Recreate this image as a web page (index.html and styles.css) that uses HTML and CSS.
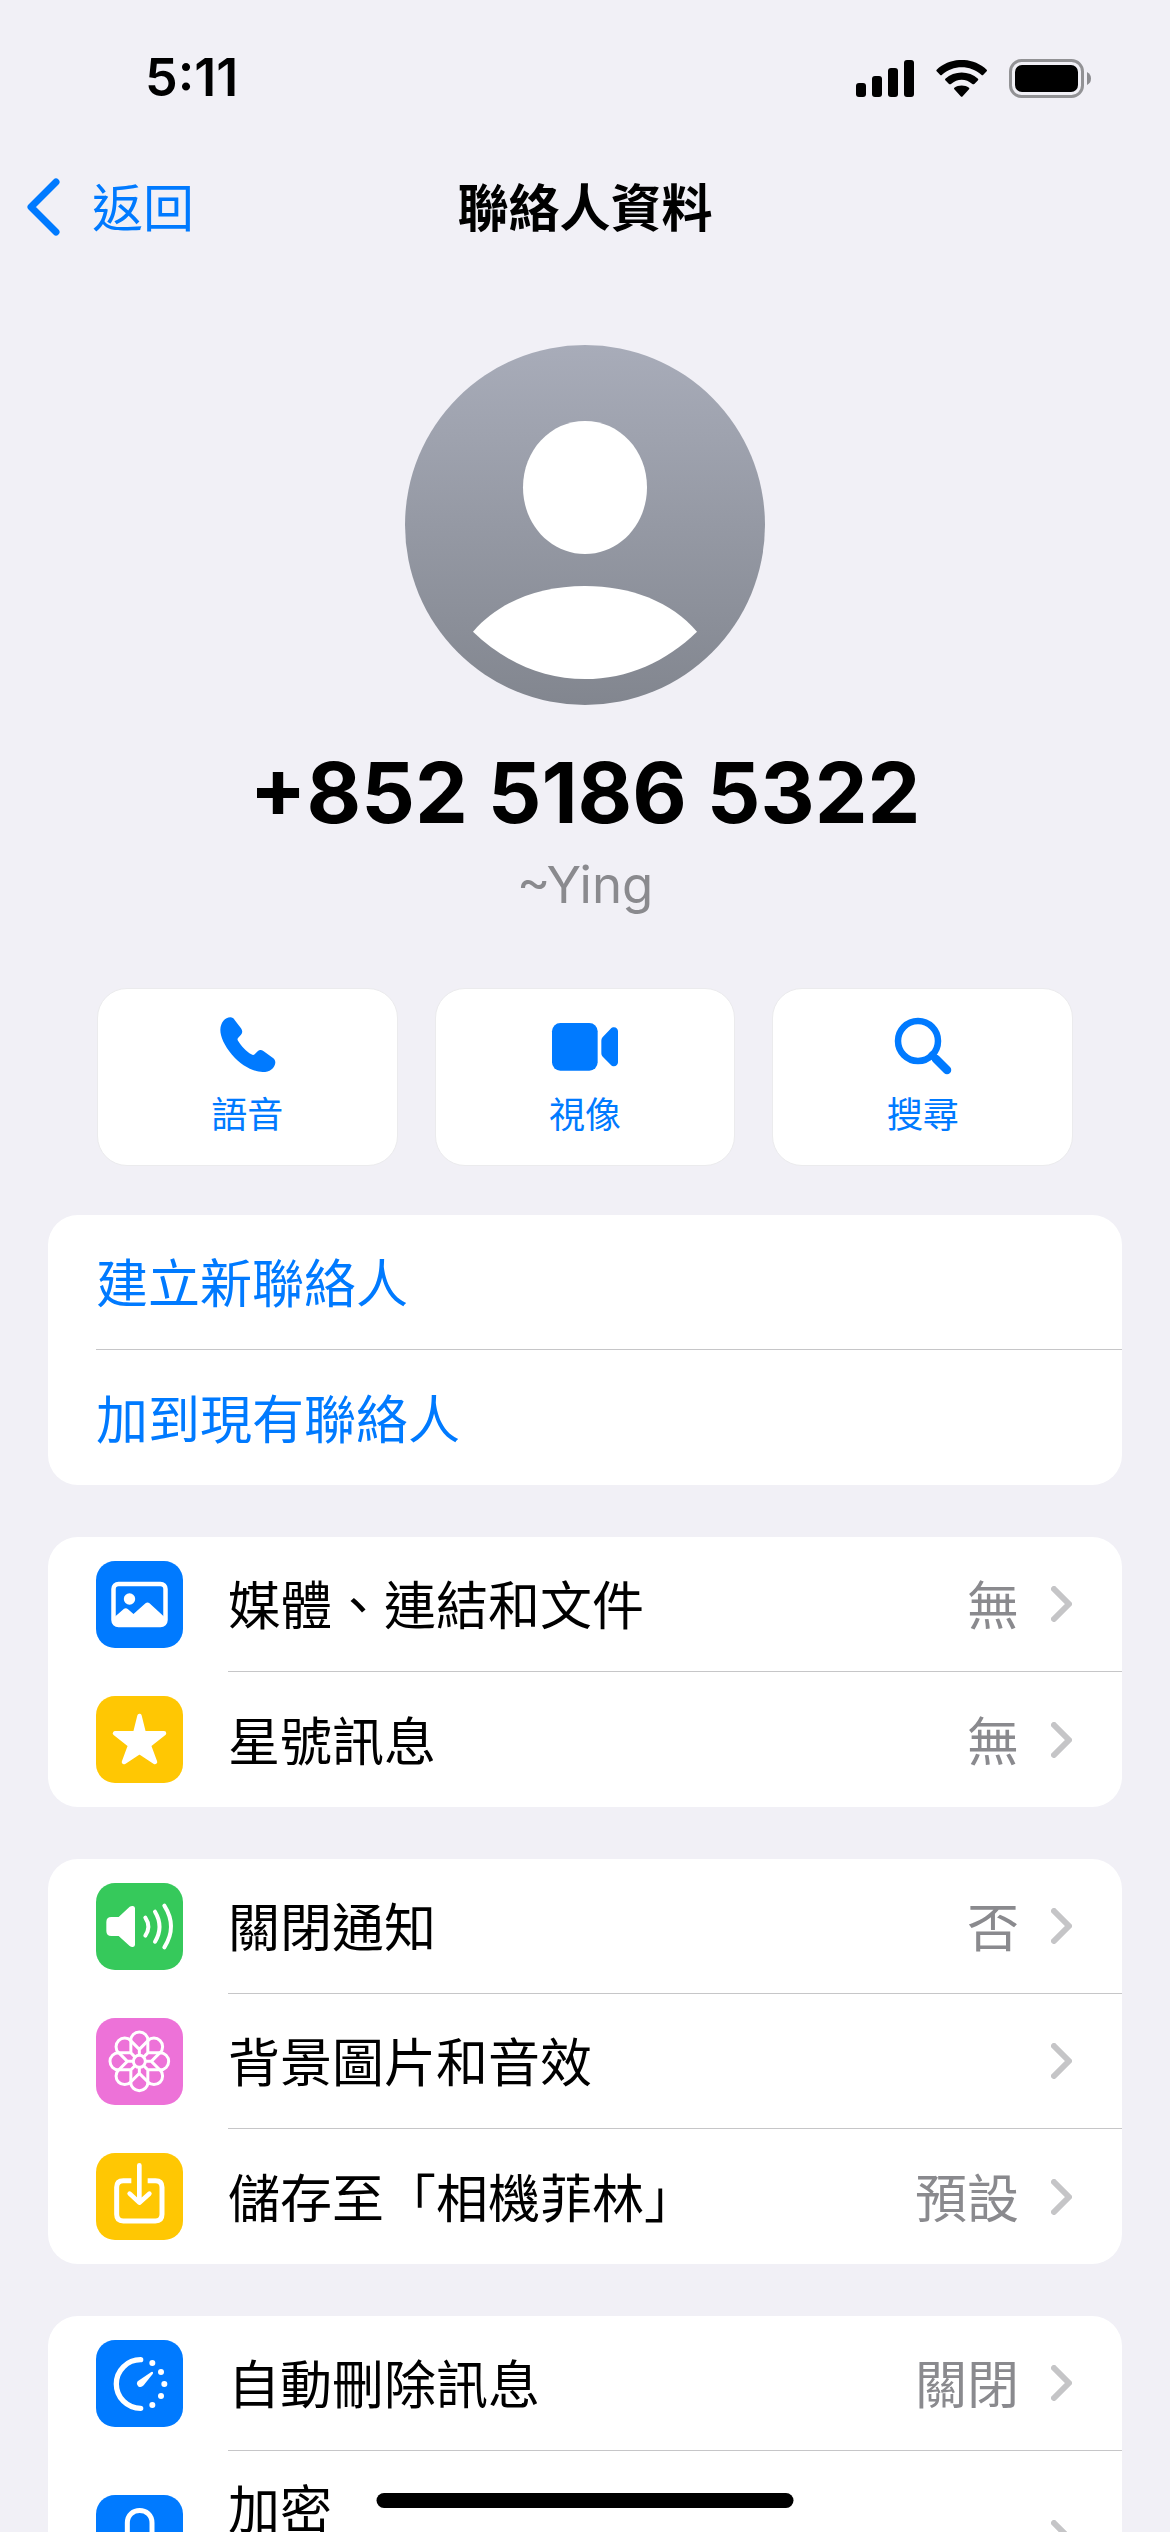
FILE: index.html
```html
<!DOCTYPE html>
<html lang="zh-HK">
<head>
<meta charset="utf-8">
<meta name="viewport" content="width=device-width, initial-scale=1">
<title>聯絡人資料</title>
<link rel="stylesheet" href="styles.css">
</head>
<body>
<svg width="0" height="0" class="defs" aria-hidden="true">
  <symbol id="chevron" viewBox="0 0 21 36"><path d="M3 3 18 18 3 33" fill="none" stroke="currentColor" stroke-width="6" stroke-linecap="round" stroke-linejoin="round"/></symbol>
</svg>

<div class="status-bar">
  <time class="status-time">5:11</time>
  <div class="status-icons">
    <svg width="58" height="37" viewBox="0 0 58 37" aria-hidden="true"><rect y="23" width="10" height="14" rx="3"/><rect x="16" y="16" width="10" height="21" rx="3"/><rect x="32" y="8" width="10" height="29" rx="3"/><rect x="48" width="10" height="37" rx="3"/></svg>
    <svg width="51" height="37" viewBox="288 42 153 111" aria-hidden="true"><path d="M290 71 C331 32 399 32 440 71 Q442 74 440 76 L430 86 Q427 89 424 86 C391 56 339 56 306 86 Q303 89 300 86 L290 76 Q288 74 290 71Z"/><path d="M316 98 C343 73 387 73 414 98 Q416 101 414 103 L403 114 Q400 116 397 114 C378 97 352 97 333 114 Q330 116 327 114 L316 103 Q314 101 316 98Z"/><path d="M343 125 C355 116 375 116 387 125 Q389 128 387 130 L368 151 Q365 154 362 151 L343 130 Q341 128 343 125Z"/></svg>
    <svg width="82" height="39" viewBox="0 0 82 39" aria-hidden="true"><rect x="1.5" y="1.5" width="72" height="36" rx="11" fill="none" stroke="#929295" stroke-width="3"/><rect x="6" y="6" width="63" height="27" rx="7"/><path d="M78 13 Q82 15 82 19.500 Q82 24 78 26Z" fill="#8c8c90"/></svg>
  </div>
</div>

<header class="nav">
  <button class="back" type="button">
    <svg width="34" height="58" viewBox="0 0 34 58" aria-hidden="true"><path d="M30 4 5 29 30 54" fill="none" stroke="currentColor" stroke-width="7" stroke-linecap="round" stroke-linejoin="round"/></svg>
    <span class="nav-text">返回</span>
  </button>
  <h1 class="nav-text nav-title">聯絡人資料</h1>
</header>

<main class="content">
  <section class="profile">
    <svg class="avatar" viewBox="75 75 1080 1080" role="img" aria-label="頭像">
      <defs><linearGradient id="avatar-fill" x1="0" y1="0" x2="0" y2="1"><stop offset="0" stop-color="#a8acb9"/><stop offset="1" stop-color="#82868f"/></linearGradient></defs>
      <circle cx="615" cy="615" r="540" fill="url(#avatar-fill)"/>
      <path fill="#fff" d="M615 303 C718 303 801 390 801 502 C801 614 718 702 615 702 C512 702 429 614 429 502 C429 390 512 303 615 303Z"/>
      <path fill="#fff" d="M279 935 C357 845 476 798 615 798 C754 798 873 845 951 935 C858 1025 743 1077 615 1077 C487 1077 372 1025 279 935Z"/>
    </svg>
    <h2 class="phone">+852 5186 5322</h2>
    <p class="alias">~Ying</p>
  </section>

  <div class="actions">
    <button class="action" type="button">
      <svg class="action-icon" viewBox="20 15 216 216" aria-hidden="true"><path d="M78 37 C84 37 88 40 91 45 L110 70 C115 77 115 83 110 89 L101 99 C99 102 99 104 101 107 C111 123 126 139 141 148 C145 151 148 151 151 148 L160 139 C165 134 171 134 177 138 L205 158 C211 162 213 167 213 173 C211 190 196 201 175 201 C148 201 110 181 83 149 C60 121 48 95 48 74 C49 53 62 37 78 37Z"/></svg>
      <span>語音</span>
    </button>
    <button class="action" type="button">
      <svg class="action-icon" viewBox="1032 15 216 216" aria-hidden="true"><rect x="1041" y="54" width="137" height="143" rx="25"/><path d="M1189 108 C1189 103 1190 99 1194 95 L1217 71 C1220 68 1223 67 1227 67 C1234 67 1239 72 1239 79 V172 C1239 179 1234 184 1227 184 C1223 184 1220 182 1217 179 L1194 156 C1190 152 1189 148 1189 143Z"/></svg>
      <span>視像</span>
    </button>
    <button class="action" type="button">
      <svg class="action-icon" viewBox="0 0 72 72" aria-hidden="true"><g fill="none" stroke="currentColor" stroke-linecap="round"><circle cx="31" cy="31" r="20" stroke-width="6.500"/><path d="M45 45 48 48" stroke-width="7"/><path d="M49 49 60 60" stroke-width="8.500"/></g></svg>
      <span>搜尋</span>
    </button>
  </div>

  <ul class="group">
    <li><button class="row row-link" type="button"><span class="row-body"><span class="label">建立新聯絡人</span></span></button></li>
    <li><button class="row row-link" type="button"><span class="row-body"><span class="label">加到現有聯絡人</span></span></button></li>
  </ul>

  <ul class="group">
    <li><button class="row" type="button">
      <svg class="tile blue" viewBox="0 0 87 87" aria-hidden="true"><rect x="17.500" y="23" width="52" height="41" rx="5" fill="none" stroke="#fff" stroke-width="4.500"/><circle cx="33.500" cy="38" r="5.700"/><path d="M18 56.500 28 47.800 Q30 46.500 32 48.200 L37.500 53 49.500 42.200 Q51.500 40.800 53.500 42.200 L69 56.500 V63 H18Z"/></svg>
      <span class="row-body"><span class="label">媒體、連結和文件</span><span class="value">無</span><svg class="chevron" aria-hidden="true"><use href="#chevron"/></svg></span>
    </button></li>
    <li><button class="row" type="button">
      <svg class="tile yellow" viewBox="0 0 87 87" aria-hidden="true"><path stroke="#fff" stroke-width="4.500" stroke-linejoin="round" d="M43.500 20 47.800 37.300 68 37.300 52.800 49.300 59 66 43.500 55.800 28 66 34.200 49.300 19 37.300 39.200 37.300Z"/></svg>
      <span class="row-body"><span class="label">星號訊息</span><span class="value">無</span><svg class="chevron" aria-hidden="true"><use href="#chevron"/></svg></span>
    </button></li>
  </ul>

  <ul class="group">
    <li><button class="row" type="button">
      <svg class="tile green" viewBox="18 24 261 261" aria-hidden="true"><path d="M49 141 Q49 126 64 126 H86 L119 95 Q124 92 129 93 Q135 94 135 100 V209 Q135 215 129 216 Q124 217 119 213 L86 183 H64 Q49 183 49 168Z"/><path fill="none" stroke="#fff" stroke-width="12" stroke-linecap="round" d="M166 128 Q184 155 166 182 M195 110 Q222 155 195 200 M223 92 Q263 155 223 217"/></svg>
      <span class="row-body"><span class="label">關閉通知</span><span class="value">否</span><svg class="chevron" aria-hidden="true"><use href="#chevron"/></svg></span>
    </button></li>
    <li><button class="row" type="button">
      <svg class="tile pink" viewBox="-130 -130 261 261" aria-hidden="true">
        <g fill="none" stroke="#fff" stroke-width="9" stroke-linejoin="round">
          <path id="leaf" d="M0 -36 L-26 -62 A26 26 0 0 1 26 -62 L0 -36 V-19"/>
          <use href="#leaf" transform="rotate(45)"/><use href="#leaf" transform="rotate(90)"/><use href="#leaf" transform="rotate(135)"/><use href="#leaf" transform="rotate(180)"/><use href="#leaf" transform="rotate(225)"/><use href="#leaf" transform="rotate(270)"/><use href="#leaf" transform="rotate(315)"/>
          <circle r="18"/>
        </g>
      </svg>
      <span class="row-body"><span class="label">背景圖片和音效</span><svg class="chevron" aria-hidden="true"><use href="#chevron"/></svg></span>
    </button></li>
    <li><button class="row" type="button">
      <svg class="tile yellow" viewBox="18 834 261 261" aria-hidden="true"><path fill="none" stroke="#fff" stroke-width="15" d="M124 917 H100 Q80 917 80 937 V1018 Q80 1038 100 1038 H196 Q216 1038 216 1018 V937 Q216 917 196 917 H173"/><path fill="none" stroke="#fff" stroke-width="14" stroke-linecap="round" stroke-linejoin="round" d="M148 871 V982 M119 956 148 983 178 956"/></svg>
      <span class="row-body"><span class="label">儲存至「相機菲林」</span><span class="value">預設</span><svg class="chevron" aria-hidden="true"><use href="#chevron"/></svg></span>
    </button></li>
  </ul>

  <ul class="group">
    <li><button class="row" type="button">
      <svg class="tile blue" viewBox="18 30 261 261" aria-hidden="true"><path fill="none" stroke="#fff" stroke-width="16" stroke-linecap="round" d="M152 89 A73 73 0 1 0 152 235"/><circle cx="187" cy="99" r="9"/><circle cx="213" cy="126" r="9"/><circle cx="223" cy="162" r="9"/><circle cx="213" cy="198" r="9"/><circle cx="187" cy="225" r="9"/><path d="M184 126 Q187 124 189 127 Q190 129 188 132 L161 166 Q154 174 146 170 Q137 163 143 154Z"/></svg>
      <span class="row-body"><span class="label">自動刪除訊息</span><span class="value">關閉</span><svg class="chevron" aria-hidden="true"><use href="#chevron"/></svg></span>
    </button></li>
    <li><button class="row row-tall" type="button">
      <svg class="tile blue" viewBox="18 492 261 261" aria-hidden="true"><path fill="none" stroke="#fff" stroke-width="15" d="M112 608 V576 C112 526 186 526 186 576 V608"/><rect x="96" y="603" width="106" height="90" rx="14"/></svg>
      <span class="row-body"><span class="label">加密</span><svg class="chevron" aria-hidden="true"><use href="#chevron"/></svg></span>
    </button></li>
  </ul>
</main>

<div class="home-indicator"></div>
</body>
</html>
```

FILE: styles.css
```css
:root {
  --bg: #f1f0f6;
  --blue: #007aff;
  --gray: #8a8a8e;
  --line: #c6c6c8;
}

* {
  box-sizing: border-box;
}

body {
  margin: 0;
  height: 100vh;
  display: flex;
  flex-direction: column;
  overflow: hidden;
  background: var(--bg);
  color: #000;
  font-family: Inter, "Noto Sans CJK TC", sans-serif;
  font-size: 52px;
  line-height: 60px;
}

h1,
h2,
p,
ul {
  margin: 0;
  padding: 0;
}

ul {
  list-style: none;
}

button {
  border: 0;
  padding: 0;
  background: none;
  color: inherit;
  font: inherit;
  cursor: pointer;
}

svg {
  display: block;
  flex: none;
}

.defs {
  position: absolute;
}

/* Status bar */
.status-bar {
  display: flex;
  align-items: flex-end;
  justify-content: space-between;
  height: 141px;
  flex: none;
  padding: 0 79px 33px 145px;
}

.status-time {
  font-weight: 600;
}

.status-icons {
  display: flex;
  align-items: center;
  gap: 22px;
  height: 60px;
}

/* Navigation bar */
.nav {
  display: grid;
  grid-template-columns: 1fr auto 1fr;
  align-items: center;
  height: 132px;
  flex: none;
  padding: 0 26px;
}

.back {
  display: flex;
  align-items: center;
  justify-self: start;
  gap: 32px;
  color: var(--blue);
}

.nav-text {
  padding-top: 3px;
  font-size: 51px;
}

.nav-title {
  font-weight: 600;
}

.content {
  flex: 1;
  min-height: 0;
  overflow-y: auto;
  scrollbar-width: none;
}

/* Contact */
.profile {
  display: flex;
  flex-direction: column;
  align-items: center;
  padding-top: 72px;
}

.avatar {
  width: 360px;
  height: 360px;
}

.phone {
  margin-top: 38px;
  font-size: 84px;
  font-weight: 700;
  line-height: 100px;
}

.alias {
  margin-top: 12px;
  font-size: 51px;
  color: var(--gray);
}

.actions {
  display: grid;
  grid-template-columns: repeat(3, 1fr);
  gap: 37px;
  padding: 0 97px;
  margin: 73px 0 49px;
}

.action {
  display: flex;
  flex-direction: column;
  align-items: center;
  gap: 11px;
  padding: 21px 0 28px;
  border: 1px solid #ebebed;
  border-radius: 30px;
  background: #fff;
  color: var(--blue);
  font-size: 36px;
  line-height: 44px;
}

.action-icon {
  width: 72px;
  height: 72px;
  fill: currentColor;
}

/* Grouped lists */
.group {
  margin: 0 48px 52px;
  border-radius: 30px;
  background: #fff;
  overflow: hidden;
}

.row {
  display: flex;
  align-items: center;
  gap: 45px;
  width: 100%;
  min-height: 135px;
  padding-left: 48px;
  text-align: left;
}

.row-link {
  color: var(--blue);
}

.row-body {
  display: flex;
  flex: 1;
  align-items: center;
  align-self: stretch;
  gap: 32px;
  padding-right: 50px;
  border-bottom: 1px solid var(--line);
}

li:last-child .row-body {
  border-bottom: 0;
}

.label,
.value {
  padding-top: 6px;
}

.label {
  flex: 1;
}

.value {
  color: var(--gray);
}

.chevron {
  width: 21px;
  height: 36px;
  color: #c5c5c7;
}

.tile {
  width: 87px;
  height: 87px;
  border-radius: 19px;
  fill: #fff;
}

.blue {
  background: #007aff;
}

.yellow {
  background: #ffc703;
}

.green {
  background: #36c95b;
}

.pink {
  background: #ed72d8;
}

.row-tall {
  min-height: 174px;
}

.row-tall .label {
  padding-bottom: 60px;
}

.home-indicator {
  position: fixed;
  bottom: 24px;
  left: 50%;
  width: 417px;
  height: 15px;
  border-radius: 8px;
  background: #000;
  transform: translateX(-50%);
}
```
